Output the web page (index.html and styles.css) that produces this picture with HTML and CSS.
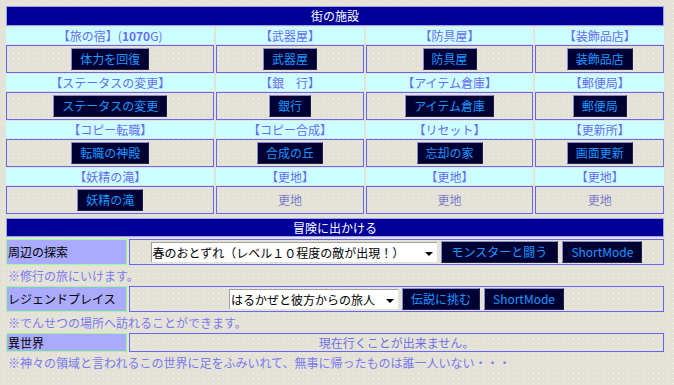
FILE: index.html
```html
<!DOCTYPE html>
<html lang="ja">
<head>
<meta charset="utf-8">
<link rel="stylesheet" href="styles.css">
</head>
<body>
<table class="town">
  <tr><th colspan="4" class="title">街の施設</th></tr>
  <tr class="lbl">
    <td class="c1">【旅の宿】(<b>1070</b>G)</td>
    <td class="c2">【武器屋】</td>
    <td class="c3">【防具屋】</td>
    <td class="c4">【装飾品店】</td>
  </tr>
  <tr class="btns">
    <td><button class="btn">体力を回復</button></td>
    <td><button class="btn">武器屋</button></td>
    <td><button class="btn">防具屋</button></td>
    <td><button class="btn">装飾品店</button></td>
  </tr>
  <tr class="lbl">
    <td>【ステータスの変更】</td>
    <td>【銀　行】</td>
    <td>【アイテム倉庫】</td>
    <td>【郵便局】</td>
  </tr>
  <tr class="btns">
    <td><button class="btn">ステータスの変更</button></td>
    <td><button class="btn">銀行</button></td>
    <td><button class="btn">アイテム倉庫</button></td>
    <td><button class="btn">郵便局</button></td>
  </tr>
  <tr class="lbl">
    <td>【コピー転職】</td>
    <td>【コピー合成】</td>
    <td>【リセット】</td>
    <td>【更新所】</td>
  </tr>
  <tr class="btns">
    <td><button class="btn">転職の神殿</button></td>
    <td><button class="btn">合成の丘</button></td>
    <td><button class="btn">忘却の家</button></td>
    <td><button class="btn">画面更新</button></td>
  </tr>
  <tr class="lbl">
    <td>【妖精の滝】</td>
    <td>【更地】</td>
    <td>【更地】</td>
    <td>【更地】</td>
  </tr>
  <tr class="btns">
    <td><button class="btn">妖精の滝</button></td>
    <td class="empty">更地</td>
    <td class="empty">更地</td>
    <td class="empty">更地</td>
  </tr>
</table>

<table class="adv">
  <tr><th colspan="2" class="title">冒険に出かける</th></tr>
  <tr class="act-row">
    <td class="name">周辺の探索</td>
    <td class="act">
      <div class="controls">
        <div class="sel w1"><span>春のおとずれ（レベル１０程度の敵が出現！）</span><i class="arrow"></i></div>
        <button class="btn wide">モンスターと闘う</button>
        <button class="btn">ShortMode</button>
      </div>
    </td>
  </tr>
  <tr><td colspan="2" class="note">※修行の旅にいけます。</td></tr>
  <tr class="act-row">
    <td class="name">レジェンドプレイス</td>
    <td class="act">
      <div class="controls">
        <div class="sel w2"><span>はるかぜと彼方からの旅人</span><i class="arrow"></i></div>
        <button class="btn">伝説に挑む</button>
        <button class="btn">ShortMode</button>
      </div>
    </td>
  </tr>
  <tr><td colspan="2" class="note">※でんせつの場所へ訪れることができます。</td></tr>
  <tr class="act-row short">
    <td class="name">異世界</td>
    <td class="act msg">現在行くことが出来ません。</td>
  </tr>
  <tr><td colspan="2" class="note">※神々の領域と言われるこの世界に足をふみいれて、無事に帰ったものは誰一人いない・・・</td></tr>
</table>
</body>
</html>
```

FILE: styles.css
```css
html, body {
  margin: 0;
  padding: 0;
}
body {
  background-color: #e4e2d7;
  background-image: radial-gradient(circle, #f3f2ea 0.8px, transparent 1px);
  background-size: 5px 5px;
  background-position: 1px 1px;
  font-family: "Noto Sans CJK JP", "Noto Sans", sans-serif;
  font-size: 12px;
  padding: 5px 0 0 4px;
  width: 674px;
  height: 385px;
  box-sizing: border-box;
  overflow: hidden;
}
table {
  border-collapse: separate;
  font-size: 12px;
}
td, th {
  padding: 0;
  box-sizing: border-box;
  text-align: center;
  line-height: 14px;
}
.title {
  background: #000099;
  border: 1px solid #a0a0f0;
  color: #ffffff;
  font-weight: normal;
  height: 20px;
}
.town {
  border-spacing: 2px 1px;
  width: 662px;
}
.town .c1 { width: 209px; }
.town .c2 { width: 148px; }
.town .c3 { width: 168px; }
.town .c4 { width: 129px; }
.lbl td {
  background: #ccffff;
  color: #6b6bf0;
  height: 17px;
}
.lbl b {
  font-weight: bold;
}
.btns td {
  border: 1px solid #6666ff;
  height: 28px;
}
.empty {
  color: #7a7ac8;
}
.btn {
  font-family: "Noto Sans CJK JP", "Noto Sans", sans-serif;
  font-size: 12px;
  height: 22px;
  line-height: 18px;
  padding: 0 8px;
  background: #000033;
  color: #1c98ff;
  border: 1px solid;
  border-color: #8a8ad0 #20204a #20204a #8a8ad0;
  vertical-align: middle;
  margin: 0;
}
.btn.wide {
  padding: 0 10px;
}
.adv {
  margin-top: 1px;
  border-spacing: 2px;
  width: 662px;
}
.adv .title {
  height: 19px;
}
.name {
  width: 121px;
  background: #aaaaff;
  border: 1px solid #99ff99;
  color: #000;
  text-align: left;
  padding-left: 1px;
  height: 26px;
}
.act {
  border: 1px solid #6666ff;
  height: 26px;
}
.short .name,
.short .act {
  height: 19px;
}
.msg {
  color: #6e6ee8;
}
.controls {
  display: flex;
  justify-content: center;
  align-items: center;
  gap: 4px;
}
.sel {
  display: flex;
  align-items: center;
  justify-content: space-between;
  height: 20px;
  background: #fff;
  border-top: 1px solid #a0a0a0;
  border-left: 1px solid #a0a0a0;
  box-sizing: border-box;
  color: #000;
  padding: 0 4px 0 1px;
  text-align: left;
  white-space: nowrap;
}
.sel.w1 { width: 286px; }
.sel.w2 { width: 169px; }
.arrow {
  width: 0;
  height: 0;
  border-left: 4px solid transparent;
  border-right: 4px solid transparent;
  border-top: 4px solid #000;
  margin-top: 2px;
}
.note {
  text-align: left;
  color: #7878f0;
  height: 17px;
  padding-left: 2px;
}
```
